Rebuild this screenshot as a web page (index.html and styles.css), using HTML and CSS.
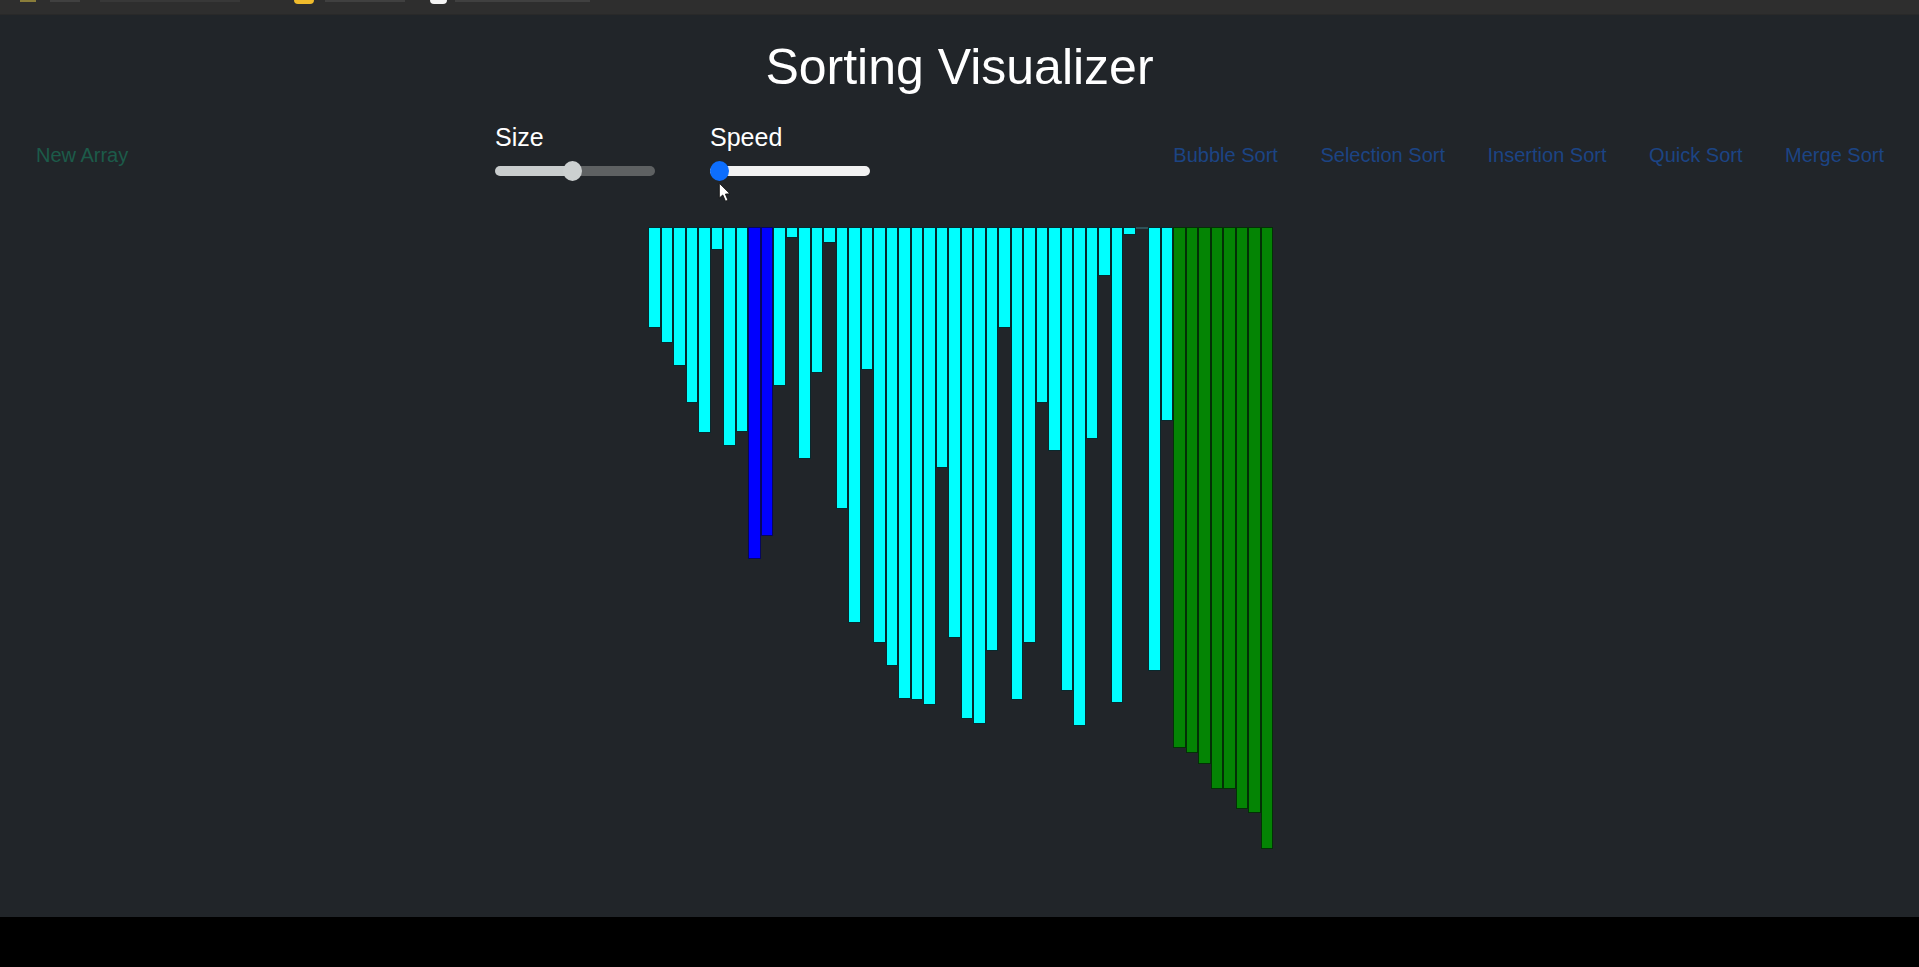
FILE: index.html
```html
<!DOCTYPE html>
<html lang="en">
<head>
    <meta charset="UTF-8">
    <title>Sorting Visualizer</title>
    <link rel="stylesheet" href="styles.css">
</head>
<body>
    <!-- bottom edge of the browser bookmarks bar -->
    <div class="bookmarks">
        <span class="mark mark-apps"></span>
        <span class="mark mark-label label-apps"></span>
        <span class="mark mark-label label-first"></span>
        <span class="mark mark-folder"></span>
        <span class="mark mark-label label-folder"></span>
        <span class="mark mark-globe"></span>
        <span class="mark mark-label label-globe"></span>
    </div>

    <main class="app">
        <h1 class="title">Sorting Visualizer</h1>

        <nav class="toolbar">
            <button class="btn btn-new">New Array</button>

            <div class="sliders">
                <div class="slider-group">
                    <label for="sizeRange">Size</label>
                    <input type="range" id="sizeRange" class="range range-size" min="0" max="100" value="48">
                </div>
                <div class="slider-group">
                    <label for="speedRange">Speed</label>
                    <input type="range" id="speedRange" class="range range-speed" min="0" max="100" value="0">
                    <svg class="cursor" width="15" height="21" viewBox="0 0 12 17">
                        <path d="M1 1 L1 13 L3.8 10.5 L6 15.6 L8 14.7 L5.9 9.8 L9.6 9.6 Z" fill="#fff" stroke="#111" stroke-width="0.7"/>
                    </svg>
                </div>
            </div>

            <div class="sorts">
                <button class="btn btn-sort">Bubble Sort</button>
                <button class="btn btn-sort">Selection Sort</button>
                <button class="btn btn-sort">Insertion Sort</button>
                <button class="btn btn-sort">Quick Sort</button>
                <button class="btn btn-sort">Merge Sort</button>
            </div>
        </nav>

        <div class="chart" id="chart"></div>
    </main>

    <div class="letterbox"></div>

    <script src="script.js"></script>
</body>
</html>
```

FILE: styles.css
```css
html, body {
    margin: 0;
    height: 100%;
}
body {
    font-family: "Liberation Sans", Arial, sans-serif;
    background-color: #000;
    display: flex;
    flex-direction: column;
    overflow: hidden;
}

/* bookmarks bar, almost completely cut off */
.bookmarks {
    height: 15px;
    flex: none;
    background-color: #2e2e2e;
    border-bottom: 1px solid #292929;
    box-sizing: border-box;
    display: flex;
    align-items: flex-start;
    padding-left: 20px;
}
.mark {
    display: block;
}
.mark-apps {
    width: 16px;
    height: 2px;
    background-color: #8a7d3a;
}
.mark-label {
    height: 2px;
    background-color: #404040;
}
.label-apps {
    width: 30px;
    margin-left: 14px;
}
.label-first {
    width: 140px;
    margin-left: 20px;
    background-color: #383838;
}
.label-folder {
    width: 80px;
    margin-left: 11px;
}
.label-globe {
    width: 135px;
    margin-left: 8px;
}
.mark-folder {
    width: 20px;
    height: 4px;
    margin-left: 54px;
    background-color: #f0bb2c;
    border-radius: 0 0 4px 4px;
}
.mark-globe {
    width: 17px;
    height: 4px;
    margin-left: 25px;
    background-color: #f4f4f4;
    border-radius: 0 0 8px 8px;
}

.app {
    height: 902px;
    flex: none;
    background-color: #212529;
    color: #fff;
}
.title {
    margin: 0;
    padding-top: 23px;
    height: 58px;
    font-size: 50px;
    line-height: 58px;
    font-weight: 400;
    text-align: center;
}

.toolbar {
    display: flex;
    align-items: center;
    height: 70px;
    margin-top: 24px;
    padding: 0 35px 0 36px;
}
.btn {
    font-family: inherit;
    font-size: 20px;
    line-height: 24px;
    padding: 0;
    border: 0;
    background: none;
}
.btn-new {
    width: 459px;
    text-align: left;
    color: #1c5b49;
}
.btn-sort {
    color: #1c4484;
}

.sliders {
    display: flex;
    gap: 55px;
    margin-top: -6px;
}
.slider-group {
    position: relative;
    display: flex;
    flex-direction: column;
    width: 160px;
}
.slider-group label {
    font-size: 25px;
    line-height: 26px;
    height: 37px;
}

.range {
    -webkit-appearance: none;
    appearance: none;
    display: block;
    width: 160px;
    height: 20px;
    margin: 0;
    background: transparent;
}
.range::-webkit-slider-runnable-track {
    height: 10px;
    border-radius: 5px;
}
.range::-webkit-slider-thumb {
    -webkit-appearance: none;
    width: 19px;
    height: 20px;
    margin-top: -5px;
    border-radius: 50%;
}
.range-size::-webkit-slider-runnable-track {
    background: linear-gradient(to right, #c9cdcd 77px, #5e6162 77px);
}
.range-size::-webkit-slider-thumb {
    background-color: #ccd0d0;
}
.range-speed::-webkit-slider-runnable-track {
    background-color: #f2f2f2;
}
.range-speed::-webkit-slider-thumb {
    background-color: #0d6efd;
}

/* mouse pointer caught in the recording */
.cursor {
    position: absolute;
    left: 8px;
    top: 58px;
}

.sorts {
    display: flex;
    gap: 42.6px;
    margin-left: auto;
}

.chart {
    display: flex;
    align-items: flex-start;
    width: 625px;
    padding-left: 2px;
    margin: 37px auto 0;
}
.bar {
    flex: 1 1 0;
    box-sizing: border-box;
    border: 1px solid #062a2e;
    background-color: #00ffff;
}
.bar-active {
    background-color: #0000ff;
    border-color: #060660;
}
.bar-sorted {
    background-color: #048404;
    border-color: #033006;
}
.bar-tiny {
    border-color: #2f5157;
}

.letterbox {
    flex: 1;
    background-color: #000;
}
```

FILE: script.js
```js
// bar heights as they stand at this moment of the bubble sort
const heights = [
    101, 116, 139, 176, 206, 23, 219, 205, 332, 309,
    159, 11, 232, 146, 16, 282, 396, 143, 416, 439,
    472, 473, 478, 241, 411, 492, 497, 424, 101, 473,
    416, 176, 224, 464, 499, 212, 49, 476, 8, 2,
    444, 194, 521, 526, 537, 562, 562, 582, 586, 622
];
const activeBars = [8, 9];
const sortedFrom = 42;

const chart = document.getElementById('chart');

heights.forEach((h, i) => {
    const bar = document.createElement('div');
    bar.className = 'bar';
    if (activeBars.includes(i)) bar.classList.add('bar-active');
    if (i >= sortedFrom) bar.classList.add('bar-sorted');
    if (h <= 2) bar.classList.add('bar-tiny');
    bar.style.height = h + 'px';
    chart.appendChild(bar);
});
```
